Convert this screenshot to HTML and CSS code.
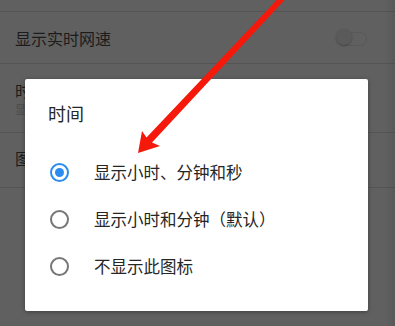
FILE: index.html
```html
<!DOCTYPE html>
<html lang="zh">
<head>
<meta charset="utf-8">
<link rel="stylesheet" href="styles.css">
</head>
<body>
<div class="screen">
  <div class="list">
    <div class="row row-top"></div>
    <div class="row row-net">
      <span class="label">显示实时网速</span>
      <span class="toggle"><span class="thumb"></span></span>
    </div>
    <div class="row row-time">
      <span class="label">时</span>
      <span class="sub">显示</span>
    </div>
    <div class="row row-icon">
      <span class="label">图</span>
    </div>
    <div class="row row-rest"></div>
  </div>
  <div class="edge"></div>

  <div class="dialog">
    <div class="title">时间</div>
    <div class="options">
      <div class="option"><span class="radio checked"></span><span class="opt-text">显示小时、分钟和秒</span></div>
      <div class="option"><span class="radio"></span><span class="opt-text">显示小时和分钟（默认）</span></div>
      <div class="option"><span class="radio"></span><span class="opt-text">不显示此图标</span></div>
    </div>
  </div>

  <svg class="arrow" width="395" height="326" viewBox="0 0 395 326">
    <polygon points="138,153 160,146 152,142.5 285.5,-1 281,-4.5 146.5,137.5 142,131" fill="#f5190b"/>
  </svg>
</div>
</body>
</html>
```

FILE: styles.css
```css
html, body {
  margin: 0;
  padding: 0;
}
body {
  width: 395px;
  height: 326px;
  overflow: hidden;
  background: #606060;
  font-family: "Noto Sans CJK SC", "Noto Sans", sans-serif;
}
.screen {
  position: relative;
  width: 395px;
  height: 326px;
  overflow: hidden;
}
.list {
  display: flex;
  flex-direction: column;
}
.row {
  border-bottom: 1px solid #555555;
  box-sizing: border-box;
  padding: 0 28px 0 15px;
  display: flex;
  align-items: center;
  color: #1a1a1a;
}
.row-top { height: 12px; }
.row-net {
  height: 52px;
  justify-content: space-between;
}
.label {
  font-size: 16px;
  line-height: 20px;
  color: #1c1c1c;
}
.row-time {
  height: 69px;
  flex-direction: column;
  align-items: flex-start;
  justify-content: flex-start;
  padding-top: 17px;
}
.row-time .label {
  line-height: 18px;
}
.row-time .sub {
  font-size: 11px;
  line-height: 13px;
  margin-top: 4px;
  color: #4a4a4a;
}
.row-icon {
  height: 55px;
  padding-bottom: 4px;
}
.row-rest {
  border-bottom: none;
  height: 140px;
}
.toggle {
  position: relative;
  width: 29px;
  height: 14px;
  border-radius: 7px;
  border: 1.5px solid #585858;
  box-sizing: border-box;
  margin-top: 2px;
}
.thumb {
  position: absolute;
  left: -3px;
  top: -3.5px;
  width: 16px;
  height: 16px;
  border-radius: 50%;
  background: #5a5a5a;
  box-shadow: 0 1px 2px rgba(0,0,0,0.25);
}
.edge {
  position: absolute;
  right: 0;
  top: 0;
  width: 10px;
  height: 326px;
  background: linear-gradient(to right, rgba(0,0,0,0), rgba(0,0,0,0.08));
}
.dialog {
  position: absolute;
  left: 25px;
  top: 79px;
  width: 343px;
  height: 232px;
  background: #ffffff;
  border-radius: 2px;
  box-shadow: 0 1px 4px rgba(0,0,0,0.35);
  box-sizing: border-box;
  padding: 23px 0 0 23px;
}
.title {
  font-size: 18px;
  line-height: 22px;
  color: #262626;
}
.options {
  display: flex;
  flex-direction: column;
  margin-top: 37px;
  gap: 24px;
}
.option {
  display: flex;
  align-items: center;
  height: 23px;
}
.radio {
  width: 19px;
  height: 19px;
  border-radius: 50%;
  border: 2px solid #777777;
  box-sizing: border-box;
  margin-left: 2px;
  margin-right: 25px;
  flex: none;
  position: relative;
}
.radio.checked {
  border-color: #2a8cf0;
}
.radio.checked::after {
  content: "";
  position: absolute;
  left: 3px;
  top: 3px;
  width: 9px;
  height: 9px;
  border-radius: 50%;
  background: #2a8cf0;
}
.opt-text {
  font-size: 16.5px;
  line-height: 23px;
  color: #262626;
  white-space: nowrap;
}
.arrow {
  position: absolute;
  left: 0;
  top: 0;
}
```
